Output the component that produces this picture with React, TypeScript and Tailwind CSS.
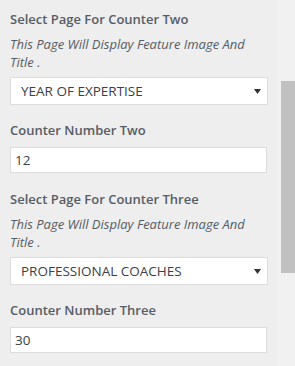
import React from "react";

type Field =
  | { kind: "select"; label: string; description: string; value: string }
  | { kind: "input"; label: string; value: string };

const fields: Field[] = [
  {
    kind: "select",
    label: "Select Page For Counter Two",
    description: "This Page Will Display Feature Image And Title .",
    value: "YEAR OF EXPERTISE",
  },
  { kind: "input", label: "Counter Number Two", value: "12" },
  {
    kind: "select",
    label: "Select Page For Counter Three",
    description: "This Page Will Display Feature Image And Title .",
    value: "PROFESSIONAL COACHES",
  },
  { kind: "input", label: "Counter Number Three", value: "30" },
];

function Arrow() {
  return (
    <svg width="7" height="5" viewBox="0 0 7 5" className="shrink-0">
      <path d="M0 0h7L3.5 5z" fill="#333" />
    </svg>
  );
}

export default function App() {
  return (
    <div
      className="flex h-[366px] w-[295px] overflow-hidden bg-[#eeeeee]"
      style={{ fontFamily: '"Open Sans", "Noto Sans", sans-serif' }}
    >
      <div className="flex w-[277px] flex-col pl-[10px] pr-[9px] pt-[7px]">
        {fields.map((field, i) => (
          <div key={i} className={i === 0 ? "" : i === 2 ? "mt-[14px]" : "mt-[13px]"}>
            <div className="text-[13px] font-semibold leading-[24px] text-[#555d66]">
              {field.label}
            </div>
            {field.kind === "select" ? (
              <>
                <p className="mt-[4px] text-[13px] italic leading-[18px] text-[#555d66]">
                  {field.description}
                </p>
                <div className="mt-[6px] flex h-[28px] w-[258px] items-center justify-between border border-[#dddddd] bg-white pl-[10px] pr-[6px] text-[13.5px] text-[#3c4046]">
                  <span>{field.value}</span>
                  <Arrow />
                </div>
              </>
            ) : (
              <div className="mt-[5px] flex h-[26px] w-[257px] items-center border border-[#dddddd] bg-white pl-[4px] text-[13.5px] text-[#3c4046]">
                {field.value}
              </div>
            )}
          </div>
        ))}
      </div>
      <div className="flex w-[18px] flex-col bg-[#f1f1f1] pl-[4px] pt-[81px]">
        <div className="h-[192px] w-full bg-[#c1c1c1]" />
      </div>
    </div>
  );
}
